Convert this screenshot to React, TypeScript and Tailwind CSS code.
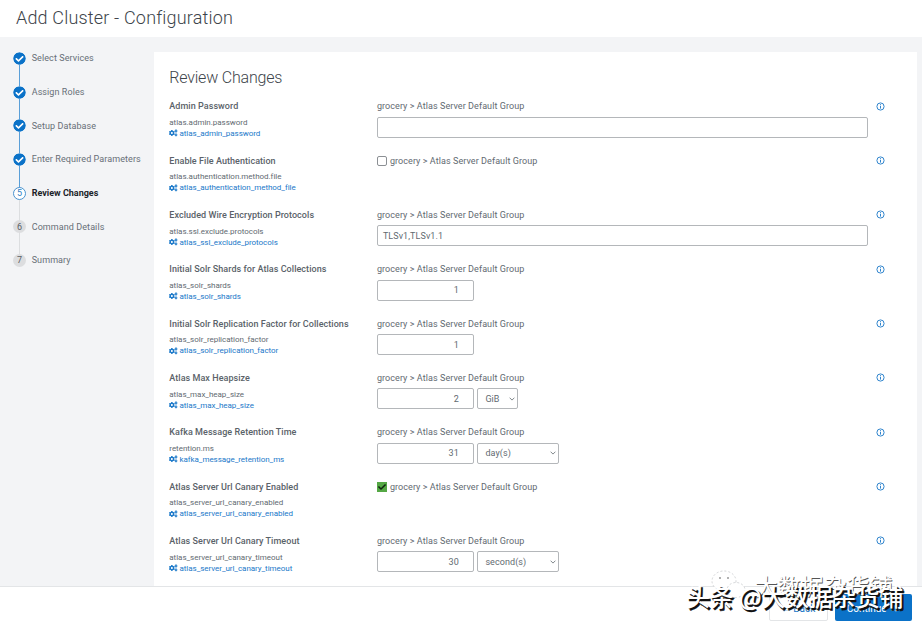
import React from 'react';
import { FaCheck, FaCogs, FaCheckCircle } from 'react-icons/fa';

const GROUP = 'grocery > Atlas Server Default Group';

type Row = {
  label: string;
  key1: string;
  key2: string;
  kind: 'text' | 'check' | 'number';
  value?: string;
  unit?: string;
  wide?: boolean;
  checked?: boolean;
};

const rows: Row[] = [
  { label: 'Admin Password', key1: 'atlas.admin.password', key2: 'atlas_admin_password', kind: 'text', value: '' },
  { label: 'Enable File Authentication', key1: 'atlas.authentication.method.file', key2: 'atlas_authentication_method_file', kind: 'check' },
  { label: 'Excluded Wire Encryption Protocols', key1: 'atlas.ssl.exclude.protocols', key2: 'atlas_ssl_exclude_protocols', kind: 'text', value: 'TLSv1,TLSv1.1' },
  { label: 'Initial Solr Shards for Atlas Collections', key1: 'atlas_solr_shards', key2: 'atlas_solr_shards', kind: 'number', value: '1' },
  { label: 'Initial Solr Replication Factor for Collections', key1: 'atlas_solr_replication_factor', key2: 'atlas_solr_replication_factor', kind: 'number', value: '1' },
  { label: 'Atlas Max Heapsize', key1: 'atlas_max_heap_size', key2: 'atlas_max_heap_size', kind: 'number', value: '2', unit: 'GiB' },
  { label: 'Kafka Message Retention Time', key1: 'retention.ms', key2: 'kafka_message_retention_ms', kind: 'number', value: '31', unit: 'day(s)', wide: true },
  { label: 'Atlas Server Url Canary Enabled', key1: 'atlas_server_url_canary_enabled', key2: 'atlas_server_url_canary_enabled', kind: 'check', checked: true },
  { label: 'Atlas Server Url Canary Timeout', key1: 'atlas_server_url_canary_timeout', key2: 'atlas_server_url_canary_timeout', kind: 'number', value: '30', unit: 'second(s)', wide: true },
];

const steps = ['Select Services', 'Assign Roles', 'Setup Database', 'Enter Required Parameters', 'Review Changes', 'Command Details', 'Summary'];

function Step({ label, index }: { label: string; index: number }) {
  const done = index < 4;
  const current = index === 4;
  return (
    <li className="relative flex h-[33.67px] items-start">
      {index < 6 && (
        <span className={`absolute left-[6px] top-[7px] h-[33.67px] w-px ${done ? 'bg-[#5a9fd8]' : 'bg-[#dcdee0]'}`} />
      )}
      <span className="relative flex h-[14px] w-[13px] shrink-0 items-center justify-center">
        {done && <FaCheckCircle className="h-[13px] w-[13px] rounded-full bg-white text-[#0b72c8]" />}
        {!done && (
          <span
            className={`flex h-[13px] w-[13px] items-center justify-center rounded-full pt-px text-[9px] leading-none ${
              current ? 'border border-[#4a93d0] bg-white text-[#2f7fc4]' : 'bg-[#dcdddf] text-[#5a6066]'
            }`}
          >
            {index + 1}
          </span>
        )}
      </span>
      <span className={`ml-[5.7px] whitespace-nowrap text-[9px] leading-[14px] ${current ? 'font-bold tracking-[0px] text-[#1b2329]' : 'tracking-[0.08px] text-[#676f76]'}`}>
        {label}
      </span>
    </li>
  );
}

function Select({ text, wide }: { text: string; wide?: boolean }) {
  return (
    <div className={`ml-[3px] flex h-[21px] items-center justify-between rounded-[2px] border border-[#b4b7ba] pl-[7px] pr-[2px] ${wide ? 'w-[82px]' : 'w-[41px]'}`}>
      <span>{text}</span>
      <svg className="h-[4px] w-[6px]" viewBox="0 0 6 4" fill="none" stroke="#73797f" strokeWidth="0.9">
        <path d="M0.6 0.7 3 3.1 5.4 0.7" />
      </svg>
    </div>
  );
}

function ConfigRow({ row }: { row: Row }) {
  return (
    <div className="flex h-[54.34px] items-start text-[9px] leading-[14px] text-[#626a71]">
      <div className="w-[207.6px] shrink-0">
        <div className="whitespace-nowrap font-medium tracking-[0.055px] text-[#5a6269]">{row.label}</div>
        <div className="mt-[3.6px] whitespace-nowrap text-[8px] leading-[11px] tracking-[-0.03px]">{row.key1}</div>
        <div className="flex items-center whitespace-nowrap text-[8px] leading-[11px] tracking-[-0.045px] text-[#1a78c9]">
          <FaCogs className="mr-[1.7px] h-[8px] w-[8.5px]" />
          {row.key2}
        </div>
      </div>
      <div className="w-[498.9px] shrink-0 tracking-[0.075px]">
        <div className="flex items-center">
          {row.kind === 'check' && (
            <span className={`mr-[3px] flex h-[10px] w-[10px] items-center justify-center ${row.checked ? 'bg-[#55a845]' : 'rounded-[2px] border border-[#8c9094] bg-white'}`}>
              {row.checked && <FaCheck className="h-[8px] w-[8px] text-[#10260f]" />}
            </span>
          )}
          <span>{GROUP}</span>
        </div>
        {row.kind === 'text' && (
          <div className="mt-[3.5px] flex h-[21px] w-[491px] items-center rounded-[2px] border border-[#b4b7ba] pl-[5px]">{row.value}</div>
        )}
        {row.kind === 'number' && (
          <div className="mt-[3.5px] flex">
            <div className="flex h-[21px] w-[97.5px] items-center justify-end rounded-[2px] border border-[#b4b7ba] pr-[14.5px]">{row.value}</div>
            {row.unit && <Select text={row.unit} wide={row.wide} />}
          </div>
        )}
      </div>
      <svg className="mt-[2.3px] h-[9px] w-[9px]" viewBox="0 0 9 9" fill="none" stroke="#2f84cd" strokeWidth="1">
        <circle cx="4.5" cy="4.5" r="3.6" />
        <path d="M4.5 3.9v2.7M4.5 2.2v1" />
      </svg>
    </div>
  );
}

export default function App() {
  return (
    <div className="relative flex h-[628px] w-[922px] flex-col overflow-hidden bg-[#f3f4f6] font-['Roboto',sans-serif]">
      <header className="h-[37px] shrink-0 bg-white pl-[16px] pt-[6px] text-[18px] font-light leading-[24px] tracking-[0.18px] text-[#3d444a]">
        Add Cluster - Configuration
      </header>
      <main className="flex h-[549px] shrink-0 overflow-hidden">
        <ol className="w-[154px] shrink-0 pl-[13px] pt-[14.4px]">
          {steps.map((s, i) => (
            <Step key={s} label={s} index={i} />
          ))}
        </ol>
        <section className="mt-[15px] w-[763px] bg-white pl-[15.3px]">
          <h1 className="h-[47.3px] pt-[15px] text-[16px] font-light leading-[22px] tracking-[-0.2px] text-[#3d444a]">Review Changes</h1>
          {rows.map((r) => (
            <ConfigRow key={r.label} row={r} />
          ))}
        </section>
      </main>
      <footer className="flex h-[42px] shrink-0 items-start justify-end border-t border-[#e3e5e7] bg-white pr-[10.5px] pt-[7px] text-[10px]">
        <button className="mr-[7px] h-[27px] w-[59px] rounded-[2px] border border-[#e3e5e7] pt-px text-[#1a78c9]">← Back</button>
        <button className="h-[27px] w-[77px] rounded-[2px] bg-[#0b72c8] pt-px text-white">Continue →</button>
      </footer>
      <svg className="absolute left-[684px] top-[564px] h-[64px] w-[238px]" viewBox="0 0 238 64">
        <g fill="#fff" stroke="#c0c3c6" strokeWidth="0.7">
          <ellipse cx="40" cy="17" rx="12" ry="10" strokeDasharray="2 2" />
          <ellipse cx="52" cy="26" rx="9" ry="7.5" strokeDasharray="2 2" />
        </g>
        <g fill="#999">
          <circle cx="36" cy="14" r="1" />
          <circle cx="44" cy="14" r="1" />
        </g>
        <g fontFamily="'Noto Sans CJK SC', sans-serif">
          <text x="71.6" y="31.5" fontSize="23" fill="#555">大数据杂货铺</text>
          <text x="70.8" y="30.7" fontSize="23" fill="#fff">大数据杂货铺</text>
          <g fontSize="23.6" fontWeight="500">
            <text x="4" y="43.8" fill="#111" stroke="#111" strokeWidth="0.5">头条 @大数据杂货铺</text>
            <text x="2.3" y="42.1" fill="#fff">头条 @大数据杂货铺</text>
          </g>
        </g>
      </svg>
    </div>
  );
}
